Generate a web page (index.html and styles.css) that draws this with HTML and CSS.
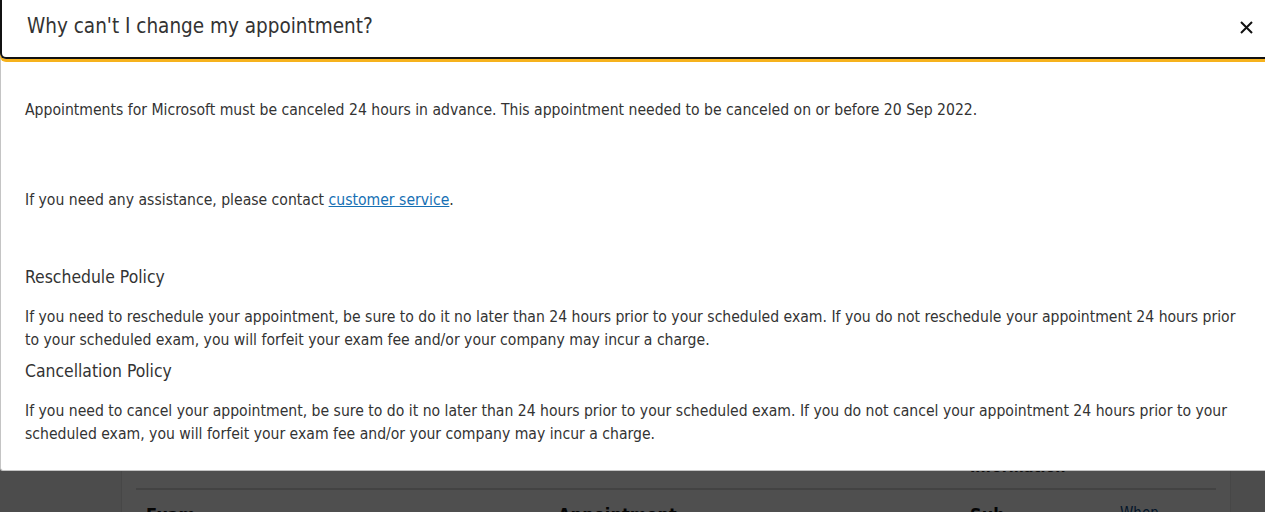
FILE: index.html
```html
<!DOCTYPE html>
<html lang="en">
<head>
<meta charset="utf-8">
<title>Why can't I change my appointment?</title>
<link rel="stylesheet" href="styles.css">
</head>
<body>
<div class="page">
  <div class="card">
    <div class="row row-top">
      <div class="cell c1"></div>
      <div class="cell c2"></div>
      <div class="cell c3">Information</div>
    </div>
    <div class="row row-labels">
      <div class="cell c1">Exam</div>
      <div class="cell c2">Appointment</div>
      <div class="cell c3">Sub</div>
      <div class="cell c4">When</div>
    </div>
  </div>
</div>
<div class="overlay"></div>
<div class="modal" role="dialog" aria-labelledby="modal-title">
  <div class="modal-header">
    <h1 class="modal-title" id="modal-title">Why can't I change my appointment?</h1>
    <button class="close" aria-label="Close">
      <svg width="13" height="13" viewBox="0 0 13 13"><path d="M1 1L12 12M12 1L1 12" stroke="#111" stroke-width="2"/></svg>
    </button>
  </div>
  <div class="modal-body">
    <p class="p-first">Appointments for Microsoft must be canceled 24 hours in advance. This appointment needed to be canceled on or before 20 Sep 2022.</p>
    <p class="p-help">If you need any assistance, please contact <a href="#">customer service</a>.</p>
    <h2 class="policy-title first">Reschedule Policy</h2>
    <p class="policy">If you need to reschedule your appointment, be sure to do it no later than 24 hours prior to your scheduled exam. If you do not reschedule your appointment 24 hours prior to your scheduled exam, you will forfeit your exam fee and/or your company may incur a charge.</p>
    <h2 class="policy-title">Cancellation Policy</h2>
    <p class="policy">If you need to cancel your appointment, be sure to do it no later than 24 hours prior to your scheduled exam. If you do not cancel your appointment 24 hours prior to your scheduled exam, you will forfeit your exam fee and/or your company may incur a charge.</p>
  </div>
</div>
</body>
</html>
```
FILE: styles.css
```css
* { box-sizing: border-box; }
html, body { margin: 0; padding: 0; }
body {
  background: #f6f6f6;
  font-family: "DejaVu Sans Condensed", "DejaVu Sans", sans-serif;
  color: #333;
  height: 512px;
  overflow: hidden;
}
.page {
  padding: 0 34px 0 121px;
}
.card {
  background: #fff;
  border-left: 1px solid #e4e4e4;
  border-right: 1px solid #e4e4e4;
  height: 512px;
  padding: 445px 14px 0 14px;
}
.row { display: flex; }
.row-top {
  height: 45px;
  border-bottom: 2px solid #d8d8d8;
  font-weight: bold;
  font-size: 16px;
  color: #222;
}
.row-top .c3 { padding-top: 12px; }
.row-labels {
  padding-top: 14px;
  font-size: 18px;
  font-weight: bold;
  color: #111;
}
.c1 { width: 422px; padding-left: 10px; }
.c2 { width: 412px; }
.c3 { width: 150px; }
.c4 { color: #0a4a86; font-weight: normal; font-size: 15px; }
.overlay {
  position: fixed;
  inset: 0;
  background: rgba(0, 0, 0, 0.69);
}
.modal {
  position: fixed;
  top: 0;
  left: 0;
  right: 0;
  height: 471px;
  background: #fff;
  border-left: 1px solid #c4c4c4;
  border-bottom: 1px solid #c4c4c4;
  border-radius: 0 0 0 3px;
}
.modal-header {
  display: flex;
  align-items: center;
  justify-content: space-between;
  height: 59px;
  border-left: 2px solid #111;
  border-bottom: 2px solid #111;
  border-bottom-left-radius: 6px;
  box-shadow: 0 3px 0 #f6b21d;
  padding: 0 12px 0 25px;
  margin-left: -1px;
}
.modal-title {
  margin: 0;
  font-size: 20.5px;
  font-weight: normal;
  color: #333;
  padding-bottom: 5px;
}
.close {
  border: 0;
  background: none;
  padding: 0;
  width: 13px;
  height: 13px;
  margin-bottom: 3px;
  display: flex;
}
.modal-body {
  padding: 0 24px 0 24px;
  font-size: 15.6px;
  line-height: 23px;
}
.modal-body p { margin: 0; }
.p-first { margin-top: 40px !important; }
.p-help { margin-top: 67px !important; }
.policy-title {
  margin: 8px 0 0 0;
  font-size: 17.4px;
  font-weight: normal;
  line-height: 23px;
}
.policy-title.first { margin-top: 54px; }
.policy { margin-top: 17px !important; }
a { color: #1670b4; }
```
